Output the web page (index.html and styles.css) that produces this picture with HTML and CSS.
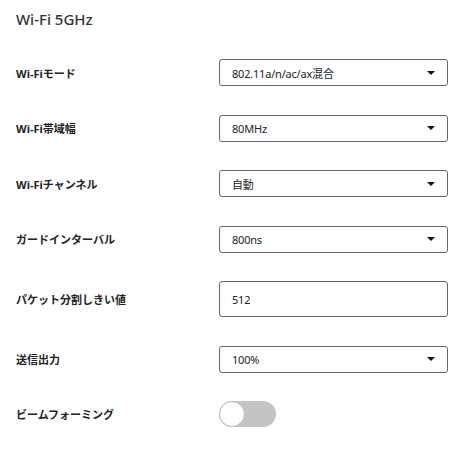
FILE: index.html
```html
<!DOCTYPE html>
<html lang="ja">
<head>
    <meta charset="UTF-8">
    <meta name="viewport" content="width=device-width, initial-scale=1.0">
    <title>Wi-Fi 5GHz</title>
    <link rel="stylesheet" href="styles.css">
</head>
<body>
    <div class="wifi-panel">
        <h2 class="wifi-title">Wi-Fi 5GHz</h2>

        <div class="wifi-form">
            <div class="wifi-row">
                <label class="wifi-label">Wi-Fiモード</label>
                <div class="wifi-select">
                    <span>802.11a/n/ac/ax混合</span>
                    <span class="wifi-caret"></span>
                </div>
            </div>
            <div class="wifi-row">
                <label class="wifi-label">Wi-Fi帯域幅</label>
                <div class="wifi-select">
                    <span>80MHz</span>
                    <span class="wifi-caret"></span>
                </div>
            </div>
            <div class="wifi-row">
                <label class="wifi-label">Wi-Fiチャンネル</label>
                <div class="wifi-select">
                    <span>自動</span>
                    <span class="wifi-caret"></span>
                </div>
            </div>
            <div class="wifi-row">
                <label class="wifi-label">ガードインターバル</label>
                <div class="wifi-select">
                    <span>800ns</span>
                    <span class="wifi-caret"></span>
                </div>
            </div>
            <div class="wifi-row">
                <label class="wifi-label">パケット分割しきい値</label>
                <div class="wifi-input">512</div>
            </div>
            <div class="wifi-row">
                <label class="wifi-label">送信出力</label>
                <div class="wifi-select">
                    <span>100%</span>
                    <span class="wifi-caret"></span>
                </div>
            </div>
            <div class="wifi-row">
                <label class="wifi-label">ビームフォーミング</label>
                <div class="wifi-toggle">
                    <span class="wifi-knob"></span>
                </div>
            </div>
        </div>
    </div>
</body>
</html>
```

FILE: styles.css
```css
body {
    margin: 0;
    background-color: #fff;
    font-family: "Noto Sans", "Noto Sans CJK JP", sans-serif;
    color: #333;
}

.wifi-panel {
    padding: 8px 14px 0 16px;
}

.wifi-title {
    margin: 0;
    font-size: 15px;
    font-weight: 500;
    line-height: 22px;
    color: #333;
}

.wifi-form {
    display: flex;
    flex-direction: column;
    gap: 28.5px;
    margin-top: 29px;
}

.wifi-row {
    display: flex;
    align-items: center;
}

.wifi-label {
    width: 203px;
    font-size: 11px;
    font-weight: bold;
    color: #222;
}

.wifi-select,
.wifi-input {
    box-sizing: border-box;
    width: 229px;
    display: flex;
    align-items: center;
    justify-content: space-between;
    padding: 0 11px 0 12px;
    border: 1px solid #666;
    border-radius: 3px;
    font-size: 11px;
    letter-spacing: -0.2px;
    color: #222;
}

.wifi-select {
    height: 27px;
}

.wifi-input {
    height: 36px;
}

.wifi-caret {
    width: 0;
    height: 0;
    border-left: 4px solid transparent;
    border-right: 4px solid transparent;
    border-top: 4px solid #111;
    margin-right: 1px;
}

.wifi-toggle {
    position: relative;
    width: 57px;
    height: 26px;
    border-radius: 13px;
    background-color: #c4c4c4;
}

.wifi-knob {
    position: absolute;
    left: 0;
    top: 0;
    box-sizing: border-box;
    width: 26px;
    height: 26px;
    border-radius: 50%;
    background-color: #fff;
    border: 1px solid #bbb;
}
```
